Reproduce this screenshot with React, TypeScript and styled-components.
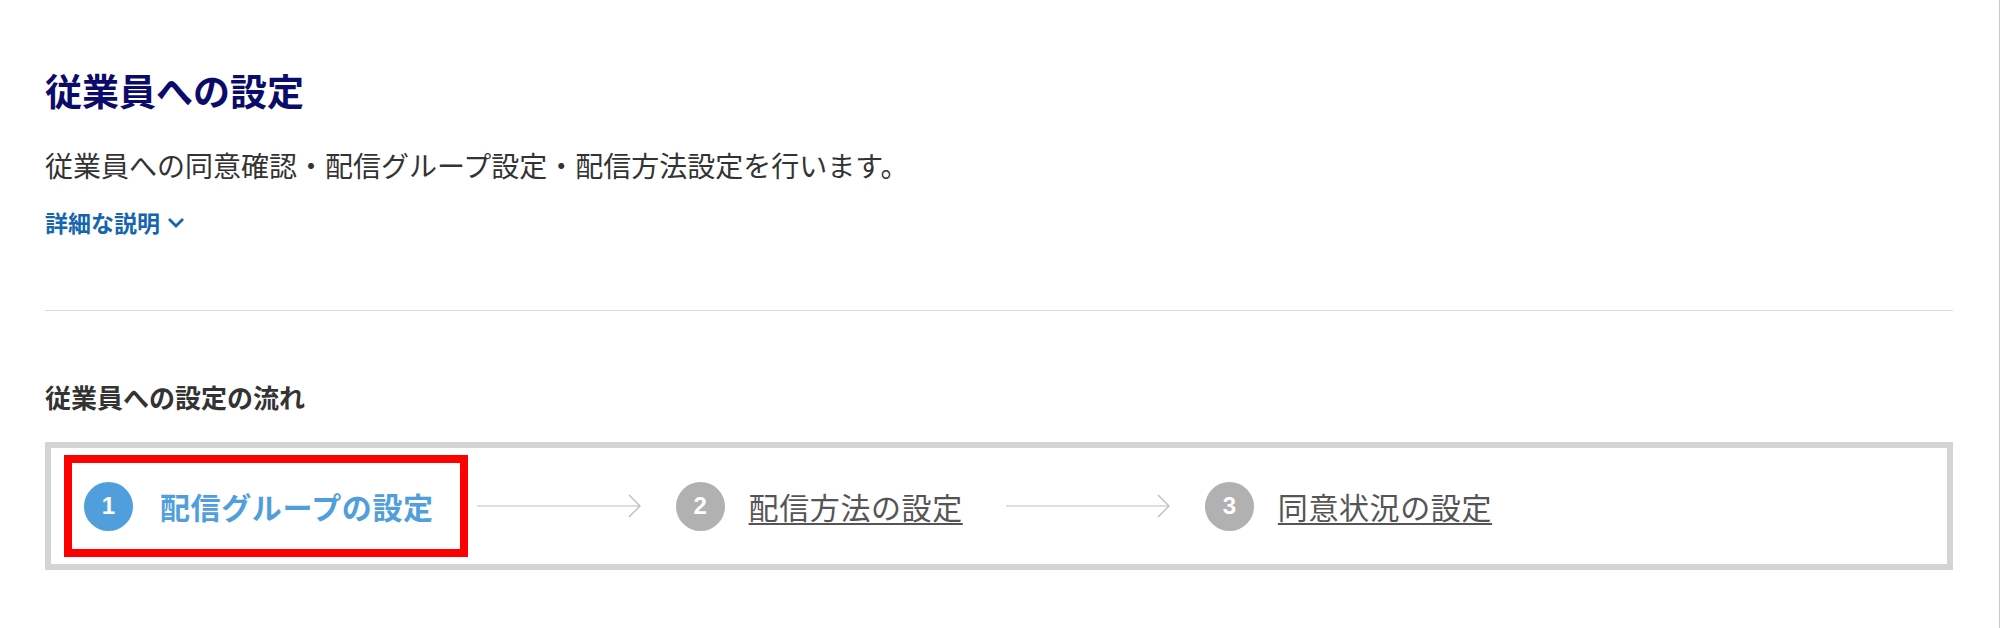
import { ReactElement } from 'react';
import styled, { createGlobalStyle } from 'styled-components';

const GlobalStyle = createGlobalStyle`
  html, body {
    margin: 0;
    padding: 0;
    background: #ffffff;
  }

  body {
    font-family: "Noto Sans CJK JP", "Noto Sans", sans-serif;
  }
`;

const Page = styled.div`
  box-sizing: border-box;
  width: 2000px;
  min-height: 628px;
  padding: 72px 47px 0 45px;
  box-shadow: inset -1px 0 0 #c8c8c8;
`;

const Title = styled.h1`
  margin: 0;
  font-size: 37px;
  line-height: 1;
  font-weight: 700;
  color: #0b0b69;
`;

const Lead = styled.p`
  margin: 42px 0 0;
  font-size: 28px;
  line-height: 1;
  color: #333333;
`;

const DetailLink = styled.a`
  display: inline-flex;
  align-items: center;
  gap: 7px;

  margin-top: 32px;

  font-size: 23px;
  line-height: 1;
  font-weight: 700;
  color: #1565b0;
  text-decoration: none;
`;

const Divider = styled.hr`
  margin: 73px 0 0;
  border: 0;
  border-top: 1px solid #dadada;
`;

const FlowHeading = styled.h2`
  margin: 73px 0 0;
  font-size: 26px;
  line-height: 1;
  font-weight: 700;
  color: #333333;
`;

const FlowBox = styled.div`
  display: flex;
  align-items: center;

  box-sizing: border-box;
  height: 128px;
  margin-top: 32px;
  padding: 0 33px;

  border: 6px solid #d4d4d4;
`;

const Step = styled.div<{ $highlighted?: boolean }>`
  position: relative;
  display: flex;
  align-items: center;
  gap: ${(p) => (p.$highlighted ? '27px' : '24px')};

  ${(p) =>
    p.$highlighted &&
    `
    &::after {
      content: '';
      position: absolute;
      left: -20px;
      right: -34px;
      top: -27px;
      bottom: -26px;
      border: 8px solid #ff0000;
    }
  `}
`;

const StepNumber = styled.span<{ $active?: boolean }>`
  display: flex;
  align-items: center;
  justify-content: center;

  width: 49px;
  height: 49px;
  border-radius: 50%;

  background: ${(p) => (p.$active ? '#509fdc' : '#b1b1b1')};
  color: #ffffff;

  font-family: "Liberation Sans", Arial, sans-serif;
  font-size: 24px;
  font-weight: 700;
`;

const StepLabel = styled.span<{ $active?: boolean }>`
  font-size: 30px;
  line-height: 1;
  letter-spacing: 0.6px;
  font-weight: ${(p) => (p.$active ? 700 : 400)};
  color: ${(p) => (p.$active ? '#509fdc' : '#555555')};
  text-decoration: ${(p) => (p.$active ? 'none' : 'underline')};
  text-underline-offset: 4px;
  text-decoration-thickness: 2px;
`;

const Arrow = styled.svg`
  flex: none;
  margin: 0 35px 0 43px;
`;

function FlowArrow(): ReactElement {
  return (
    <Arrow width="164" height="24" viewBox="0 0 164 24">
      <line x1="0" y1="12" x2="163" y2="12" stroke="#bdbdbd" strokeWidth="1.2" />
      <polyline points="152,1 163,12 152,23" fill="none" stroke="#bdbdbd" strokeWidth="1.4" />
    </Arrow>
  );
}

export default function App(): ReactElement {
  return (
    <>
      <GlobalStyle />
      <Page>
        <Title>従業員への設定</Title>
        <Lead>従業員への同意確認・配信グループ設定・配信方法設定を行います。</Lead>
        <DetailLink href="#">
          詳細な説明
          <svg width="18" height="11" viewBox="0 0 18 11">
            <polyline points="2,2 9,9 16,2" fill="none" stroke="#1565b0" strokeWidth="2.8" />
          </svg>
        </DetailLink>
        <Divider />
        <FlowHeading>従業員への設定の流れ</FlowHeading>
        <FlowBox>
          <Step $highlighted>
            <StepNumber $active>1</StepNumber>
            <StepLabel $active>配信グループの設定</StepLabel>
          </Step>
          <FlowArrow />
          <Step>
            <StepNumber>2</StepNumber>
            <StepLabel>配信方法の設定</StepLabel>
          </Step>
          <FlowArrow />
          <Step>
            <StepNumber>3</StepNumber>
            <StepLabel>同意状況の設定</StepLabel>
          </Step>
        </FlowBox>
      </Page>
    </>
  );
}
